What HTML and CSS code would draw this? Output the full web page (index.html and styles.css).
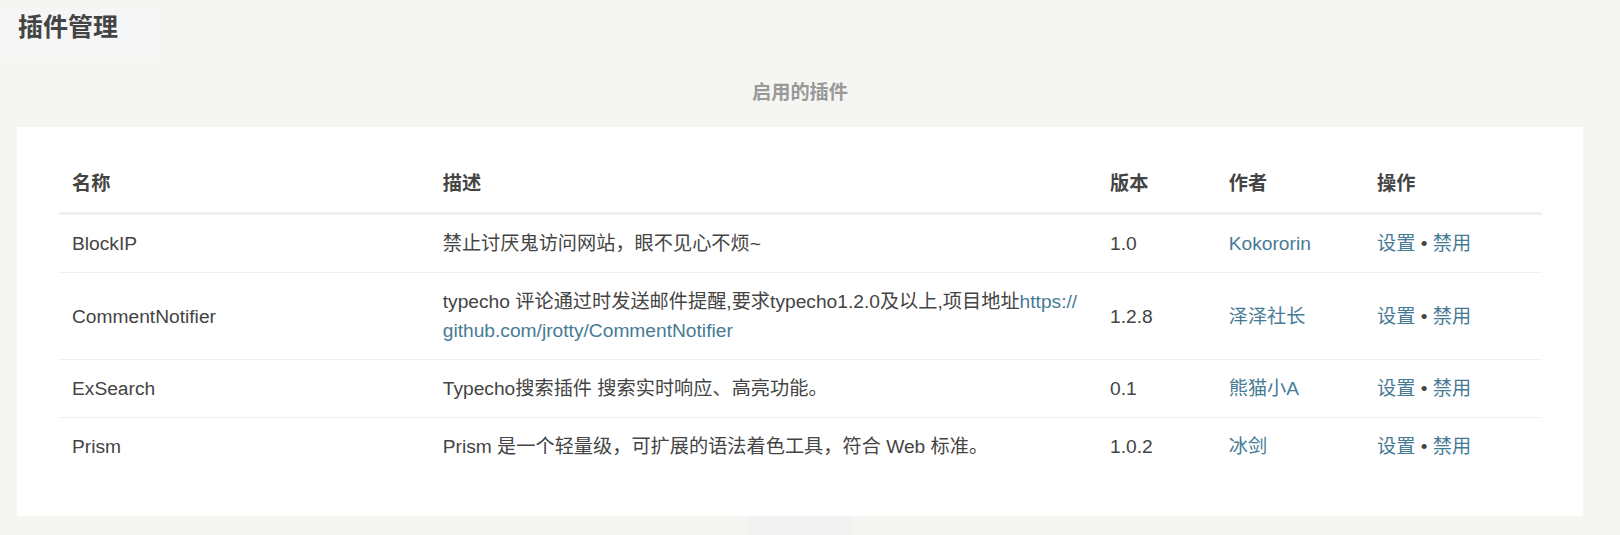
FILE: index.html
```html
<!DOCTYPE html>
<html lang="zh-CN">
<head>
<meta charset="utf-8">
<title>插件管理</title>
<link rel="stylesheet" href="styles.css">
</head>
<body>
<div class="page-title"><h2>插件管理</h2></div>
<div class="main">
  <h3 class="section-title">启用的插件</h3>
  <div class="panel">
    <table class="plugin-table">
      <colgroup>
        <col class="c-name">
        <col class="c-desc">
        <col class="c-ver">
        <col class="c-author">
        <col class="c-op">
      </colgroup>
      <thead>
        <tr><th>名称</th><th>描述</th><th>版本</th><th>作者</th><th>操作</th></tr>
      </thead>
      <tbody>
        <tr>
          <td>BlockIP</td>
          <td>禁止讨厌鬼访问网站，眼不见心不烦~</td>
          <td>1.0</td>
          <td><a href="#">Kokororin</a></td>
          <td><a href="#">设置</a> &bull; <a href="#">禁用</a></td>
        </tr>
        <tr>
          <td>CommentNotifier</td>
          <td>typecho 评论通过时发送邮件提醒,要求typecho1.2.0及以上,项目地址<a href="#">https://<wbr>github.com/jrotty/CommentNotifier</a></td>
          <td>1.2.8</td>
          <td><a href="#">泽泽社长</a></td>
          <td><a href="#">设置</a> &bull; <a href="#">禁用</a></td>
        </tr>
        <tr>
          <td>ExSearch</td>
          <td>Typecho搜索插件 搜索实时响应、高亮功能。</td>
          <td>0.1</td>
          <td><a href="#">熊猫小A</a></td>
          <td><a href="#">设置</a> &bull; <a href="#">禁用</a></td>
        </tr>
        <tr>
          <td>Prism</td>
          <td>Prism 是一个轻量级，可扩展的语法着色工具，符合 Web 标准。</td>
          <td>1.0.2</td>
          <td><a href="#">冰剑</a></td>
          <td><a href="#">设置</a> &bull; <a href="#">禁用</a></td>
        </tr>
      </tbody>
    </table>
  </div>
  <div class="pager-stub"></div>
</div>
</body>
</html>
```
FILE: styles.css
```css
html, body {
  margin: 0;
  padding: 0;
}
body {
  background: #f5f5f2;
  color: #444;
  font-family: "Liberation Sans", Arial, "Noto Sans CJK SC", sans-serif;
  font-size: 19.2px;
}
.page-title {
  margin-top: 8px;
  width: 161px;
  height: 52px;
  box-sizing: border-box;
  padding: 4px 0 0 18px;
  background: #f6f6f7;
}
.page-title h2 {
  margin: 0;
  font-size: 25px;
  line-height: 30px;
  font-weight: bold;
  color: #444;
}
.main {
  margin-left: 17px;
  width: 1566px;
}
.section-title {
  margin: 18px 0 19px;
  text-align: center;
  font-size: 19.2px;
  line-height: 30px;
  font-weight: bold;
  color: #999;
}
.panel {
  background: #fff;
  padding: 28px 41px 41px 42px;
}
.plugin-table {
  width: 100%;
  table-layout: fixed;
  border-collapse: separate;
  border-spacing: 0;
}
.c-name { width: 25%; }
.c-desc { width: 45%; }
.c-ver { width: 8%; }
.c-author { width: 10%; }
.c-op { width: 12%; }
.plugin-table th,
.plugin-table td {
  padding: 14px 13px;
  line-height: 29px;
  text-align: left;
  vertical-align: middle;
}
.plugin-table th {
  font-weight: bold;
  border-bottom: 2px solid #f0f0ec;
}
.plugin-table td {
  border-top: 1px solid #f0f0ec;
}
.plugin-table a {
  color: #467b96;
  text-decoration: none;
}
.pager-stub {
  width: 106px;
  height: 19px;
  margin: 0 auto;
  background: #f2f2f3;
}
```
